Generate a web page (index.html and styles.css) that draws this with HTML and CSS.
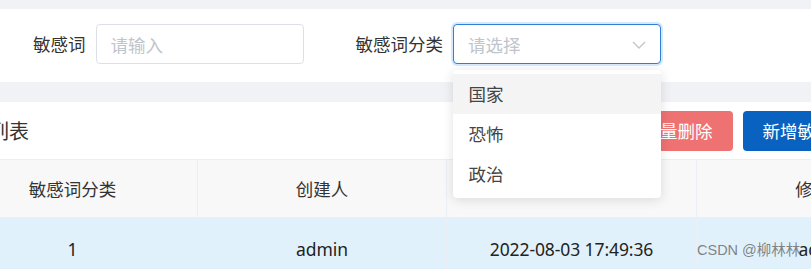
FILE: index.html
```html
<!DOCTYPE html>
<html lang="zh-CN">
<head>
<meta charset="utf-8">
<title>敏感词管理</title>
<link rel="stylesheet" href="styles.css">
</head>
<body>
<div class="page">
  <div class="search-panel">
    <div class="field">
      <span class="label">敏感词</span>
      <div class="input"><span class="placeholder">请输入</span></div>
    </div>
    <div class="field field-select">
      <span class="label">敏感词分类</span>
      <div class="input select is-focus">
        <span class="placeholder">请选择</span>
        <svg class="arrow" width="14" height="8" viewBox="0 0 14 8"><path d="M1 1 L7 7 L13 1" fill="none" stroke="#c0c4cc" stroke-width="1.3"/></svg>
      </div>
      <ul class="dropdown">
        <li class="option hover">国家</li>
        <li class="option">恐怖</li>
        <li class="option">政治</li>
      </ul>
    </div>
  </div>

  <div class="card">
    <div class="card-head">
      <span class="title">列表</span>
      <div class="actions">
        <button class="btn btn-danger">批量删除</button>
        <button class="btn btn-primary">新增敏感词</button>
      </div>
    </div>
    <div class="table">
      <div class="th">敏感词分类</div>
      <div class="th">创建人</div>
      <div class="th">创建时间</div>
      <div class="th">修改人</div>
      <div class="td">1</div>
      <div class="td">admin</div>
      <div class="td">2022-08-03 17:49:36</div>
      <div class="td td-last">admin</div>
    </div>
  </div>
  <div class="watermark">CSDN @柳林林</div>
</div>
</body>
</html>
```

FILE: styles.css
```css
* { box-sizing: border-box; }
html, body {
  margin: 0;
  padding: 0;
  background: #f0f2f5;
  overflow: hidden;
  width: 811px;
  height: 269px;
}
body {
  font-family: "Noto Sans", "Noto Sans CJK SC", sans-serif;
  font-size: 17.5px;
  color: #303133;
}
.page {
  position: relative;
  padding-top: 9px;
}
.search-panel {
  background: #fff;
  height: 73px;
  display: flex;
  align-items: flex-start;
  padding: 15px 0 0 33px;
  gap: 52px;
}
.field {
  display: flex;
  align-items: center;
  gap: 10px;
  position: relative;
}
.label {
  color: #333;
  line-height: 40px;
  white-space: nowrap;
}
.input {
  width: 208px;
  height: 40px;
  border: 1px solid #dcdfe6;
  border-radius: 4px;
  background: #fff;
  display: flex;
  align-items: center;
  padding: 0 14px;
}
.placeholder {
  color: #c0c4cc;
}
.select {
  justify-content: space-between;
}
.select.is-focus {
  border-color: #2d7fd8;
  box-shadow: 0 0 0 2px rgba(64, 158, 255, 0.22);
}
.arrow {
  margin-top: 1px;
}
.dropdown {
  position: absolute;
  left: 97px;
  top: 46px;
  width: 208px;
  margin: 0;
  padding: 4px 0;
  list-style: none;
  background: #fff;
  border-radius: 4px;
  box-shadow: 0 2px 12px rgba(0, 0, 0, 0.12);
  z-index: 10;
}
.option {
  height: 40px;
  line-height: 40px;
  padding-left: 16px;
  color: #444;
}
.option.hover {
  background: #f4f4f5;
}
.card {
  margin-top: 20px;
  margin-left: -52px;
  width: 942px;
  background: #fff;
}
.card-head {
  height: 57px;
  display: flex;
  align-items: center;
  justify-content: space-between;
  padding: 0 20px 0 41px;
}
.title {
  font-size: 20px;
  color: #333;
}
.actions {
  display: flex;
  gap: 10px;
}
.btn {
  height: 40px;
  padding: 0 20px;
  border: none;
  border-radius: 4px;
  font-family: inherit;
  font-size: 17.5px;
  color: #fff;
}
.btn-danger { background: #ef7272; }
.btn-primary { background: #0a62c0; }
.table {
  display: grid;
  grid-template-columns: 250px 249px 250px 250px;
  border-top: 1px solid #ebeef5;
}
.th, .td {
  display: flex;
  align-items: center;
  justify-content: center;
  border-right: 1px solid #ebeef5;
  white-space: nowrap;
}
.th {
  height: 58px;
  background: #f8f8f8;
  color: #333;
  border-bottom: 1px solid #ebeef5;
}
.td {
  height: 62px;
  background: #e1f1fb;
  color: #222;
  letter-spacing: -0.1px;
}
.td-last {
  padding-left: 6px;
}
.watermark {
  position: absolute;
  left: 697px;
  top: 239px;
  font-size: 14.5px;
  color: rgba(110, 110, 110, 0.85);
  font-family: "Liberation Sans", "Noto Sans CJK SC", sans-serif;
  line-height: 22px;
  white-space: nowrap;
}
```
